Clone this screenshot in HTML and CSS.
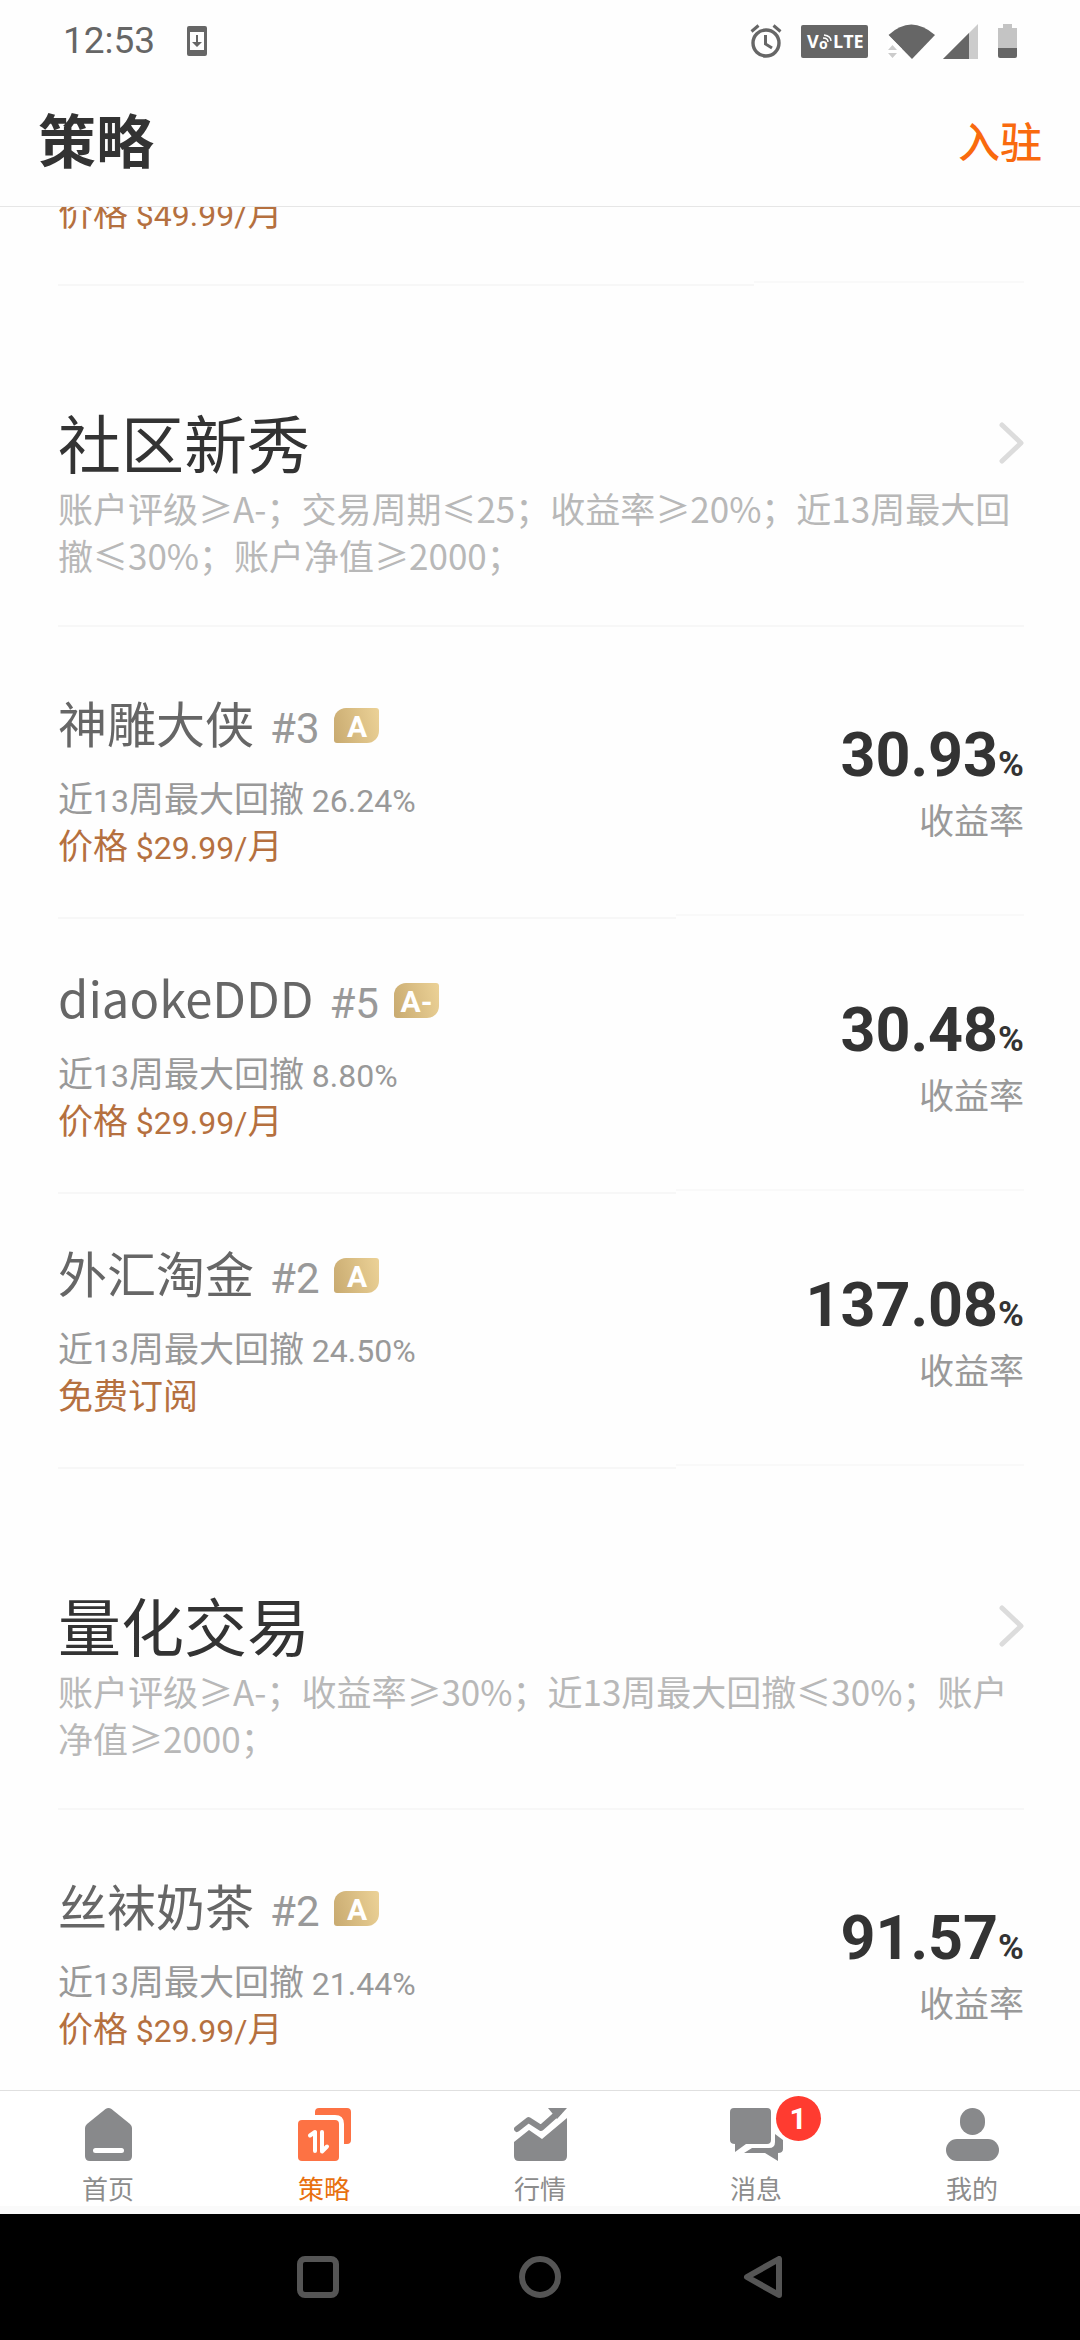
FILE: index.html
```html
<!DOCTYPE html>
<html lang="zh-CN">
<head>
<meta charset="utf-8">
<meta name="viewport" content="width=device-width, initial-scale=1">
<title>策略</title>
<link rel="stylesheet" href="styles.css">
</head>
<body>
<div class="statusbar">
  <div class="status-left">
    <span class="clock">12:53</span>
    <svg class="icon-update" width="20" height="30" viewBox="0 0 20 30"><path fill="#666" fill-rule="evenodd" d="M2 0h16a2 2 0 0 1 2 2v26a2 2 0 0 1-2 2H2a2 2 0 0 1-2-2V2a2 2 0 0 1 2-2zM3 6v18h14V6zM9 9h2v7h4l-5 5-5-5h4z"/></svg>
  </div>
  <div class="status-right">
    <svg width="32" height="34" viewBox="0 0 32 34" fill="none" stroke="#666"><circle cx="16" cy="19" r="13" stroke-width="3.4"/><path stroke-width="3" d="M15.500 11v9l6.500 4M1.500 7.500l7-6M30.500 7.500l-7-6"/></svg>
    <svg class="volte" width="67" height="33" viewBox="0 0 67 33"><rect width="67" height="33" rx="2" fill="#666"/><g fill="#fff" font-family="Open Sans" font-weight="700"><text x="6" y="23" font-size="18">V</text><text x="18" y="24" font-size="14">o</text><text x="32" y="23" font-size="18">LTE</text></g><path d="M22 13q5 0 5 4M23 10q7 1 7 6" fill="none" stroke="#fff" stroke-width="1.500"/></svg>
    <svg class="wifi" width="47" height="35" viewBox="0 0 47 35"><path fill="#666" d="M0.500 11Q23 -10 47 11L24 35z"/><path fill="#fff" d="M0 11L14 25v10H0z"/><path fill="#ccc" d="M0 26l4.500-5L9 26zM0 29h9l-4.500 5z"/></svg>
    <svg class="signal" width="35" height="35" viewBox="0 0 35 35"><path fill="#ccc" d="M35 0v35H0z"/><path fill="#666" d="M26 9v26H0z"/></svg>
    <svg class="battery" width="19" height="34" viewBox="0 0 19 34"><path fill="#c4c4c4" d="M5 0h9v4h5v20H0V4h5z"/><path fill="#666" d="M0 24h19v8a2 2 0 0 1-2 2H2a2 2 0 0 1-2-2z"/></svg>
  </div>
</div>
<header class="header">
  <h1 class="title">策略</h1>
  <button class="join" type="button">入驻</button>
</header>
<main class="content">
  <div class="list">
    <article class="item item-partial">
      <div class="info"><p class="price">价格 <span class="num">$49.99/</span>月</p></div>
      <div class="yield"></div>
    </article>

    <section class="group">
      <div class="group-head">
        <a class="group-link" href="#rookies"><h2 class="group-title">社区新秀</h2>
          <svg class="arrow" width="25" height="42" viewBox="0 0 25 42"><path d="M3 3l19 18L3 39" fill="none" stroke="#dcdcdc" stroke-width="5" stroke-linecap="round" stroke-linejoin="round"/></svg></a>
        <p class="rules">账户评级≥A-；交易周期≤25；收益率≥20%；近13周最大回撤≤30%；账户净值≥2000；</p>
      </div>
      <article class="item">
        <div class="info">
          <h3 class="name">神雕大侠 <span class="rank">#3</span><span class="grade">A</span></h3>
          <p class="drawdown">近<span class="num">13</span>周最大回撤 <span class="num">26.24%</span></p>
          <p class="price">价格 <span class="num">$29.99/</span>月</p>
        </div>
        <div class="yield"><p class="value">30.93<small class="unit">%</small></p><p class="caption">收益率</p></div>
      </article>
      <article class="item">
        <div class="info">
          <h3 class="name">diaokeDDD <span class="rank">#5</span><span class="grade">A-</span></h3>
          <p class="drawdown">近<span class="num">13</span>周最大回撤 <span class="num">8.80%</span></p>
          <p class="price">价格 <span class="num">$29.99/</span>月</p>
        </div>
        <div class="yield"><p class="value">30.48<small class="unit">%</small></p><p class="caption">收益率</p></div>
      </article>
      <article class="item">
        <div class="info">
          <h3 class="name">外汇淘金 <span class="rank">#2</span><span class="grade">A</span></h3>
          <p class="drawdown">近<span class="num">13</span>周最大回撤 <span class="num">24.50%</span></p>
          <p class="price">免费订阅</p>
        </div>
        <div class="yield"><p class="value">137.08<small class="unit">%</small></p><p class="caption">收益率</p></div>
      </article>
    </section>

    <section class="group">
      <div class="group-head">
        <a class="group-link" href="#quant"><h2 class="group-title">量化交易</h2>
          <svg class="arrow" width="25" height="42" viewBox="0 0 25 42"><path d="M3 3l19 18L3 39" fill="none" stroke="#dcdcdc" stroke-width="5" stroke-linecap="round" stroke-linejoin="round"/></svg></a>
        <p class="rules">账户评级≥A-；收益率≥30%；近13周最大回撤≤30%；账户净值≥2000；</p>
      </div>
      <article class="item">
        <div class="info">
          <h3 class="name">丝袜奶茶 <span class="rank">#2</span><span class="grade">A</span></h3>
          <p class="drawdown">近<span class="num">13</span>周最大回撤 <span class="num">21.44%</span></p>
          <p class="price">价格 <span class="num">$29.99/</span>月</p>
        </div>
        <div class="yield"><p class="value">91.57<small class="unit">%</small></p><p class="caption">收益率</p></div>
      </article>
    </section>
  </div>
</main>
<nav class="tabs">
  <a class="tab" href="#home"><svg width="53" height="53" viewBox="0 0 53 53"><path fill="#88898b" d="M23.500 1q3-2 6 0L48 16q2 2 2 4v28q0 5-5 5H8q-5 0-5-5V20q0-2 2-4z"/><rect x="11" y="40" width="31" height="5" rx="2.500" fill="#fff"/></svg>首页</a>
  <a class="tab tab-active" href="#strategy"><svg width="53" height="53" viewBox="0 0 53 53"><g fill="#fd7244"><path d="M17 7V4q0-4 4-4h28q4 0 4 4v28q0 4-4 4h-3V16q0-9-9-9z"/><rect y="12" width="41" height="41" rx="4"/></g><path d="M12 27.500l5-3.500V43M24 24v19.500l5-5" fill="none" stroke="#fff" stroke-width="4" stroke-linecap="round" stroke-linejoin="round"/></svg>策略</a>
  <a class="tab" href="#market"><svg width="53" height="53" viewBox="0 0 53 53"><path d="M3 21l11.500-9L27 20 45 4" fill="none" stroke="#88898b" stroke-width="6" stroke-linecap="round" stroke-linejoin="round"/><g fill="#88898b"><path d="M34 0h19L43 11z"/><path d="M0 34l15-12 13 9L53 10v38q0 5-5 5H5q-5 0-5-5z"/></g></svg>行情</a>
  <a class="tab" href="#messages"><span class="tab-icon"><svg width="53" height="53" viewBox="0 0 53 53"><g fill="#88898b"><path d="M4 0h33q4 0 4 4v28q0 4-4 4H16l-11 8v-8q-5 0-5-4V4q0-4 4-4z"/><path d="M45 26l8 6v9q0 4-5 4v8l-13-8H14l8-5h17q6 0 6-6z"/></g></svg><span class="badge">1</span></span>消息</a>
  <a class="tab" href="#me"><svg width="53" height="53" viewBox="0 0 53 53"><g fill="#88898b"><rect x="14" width="25" height="27" rx="12.500"/><rect y="31" width="53" height="22" rx="11"/></g></svg>我的</a>
</nav>
<div class="sysbar">
  <button class="sys" type="button" aria-label="最近任务"><svg width="42" height="42" viewBox="0 0 42 42"><rect x="3" y="3" width="36" height="36" rx="5" fill="none" stroke="#555" stroke-width="6"/></svg></button>
  <button class="sys" type="button" aria-label="主屏幕"><svg width="42" height="42" viewBox="0 0 42 42"><circle cx="21" cy="21" r="18" fill="none" stroke="#555" stroke-width="6"/></svg></button>
  <button class="sys" type="button" aria-label="返回"><svg width="42" height="42" viewBox="0 0 42 42"><path d="M38 3v36L6 21z" fill="none" stroke="#555" stroke-width="6" stroke-linejoin="round"/></svg></button>
</div>
</body>
</html>
```

FILE: styles.css
```css
* { box-sizing: border-box; margin: 0; padding: 0; }

body {
  display: flex;
  flex-direction: column;
  height: 100vh;
  background: #fefefe;
  color: #333;
  font-family: "Noto Sans CJK SC", sans-serif;
}

a { color: inherit; text-decoration: none; }
button { border: 0; background: none; font: inherit; color: inherit; }
svg { display: block; flex: none; }

/* Status bar */
.statusbar {
  display: flex;
  justify-content: space-between;
  align-items: center;
  height: 82px;
  padding: 0 63px;
}
.status-left { display: flex; align-items: center; gap: 32px; }
.clock { font: 400 37px/44px Roboto, sans-serif; color: #666; }
.status-right { display: flex; align-items: center; }
.volte { margin-left: 19px; }
.wifi { margin-left: 20px; }
.signal { margin-left: 8px; }
.battery { margin-left: 20px; }

/* Header */
.header {
  display: flex;
  justify-content: space-between;
  align-items: center;
  height: 125px;
  padding: 0 38px 8px;
  border-bottom: 1px solid #e6e6e6;
}
.title { font-size: 58px; font-weight: 700; line-height: 112px; padding-bottom: 4px; }
.join { font-size: 42px; font-weight: 500; line-height: 116px; color: #f96a0e; }

/* Strategy list, scrolled under the header */
.content { flex: 1; min-height: 0; overflow: hidden; }
.list { margin-top: -20px; padding: 0 56px 0 58px; }

.group-head {
  padding: 112px 0 47px;
  margin-bottom: 17px;
  border-bottom: 2px solid #f7f7f7;
}
.group-link { display: flex; justify-content: space-between; align-items: center; }
.group-title { font-size: 63px; font-weight: 400; line-height: 86px; }
.arrow { margin-top: 4px; }
.rules { font-size: 35px; font-weight: 400; line-height: 47px; color: #b8b8b8; }

.item { display: flex; align-items: flex-start; }
.info {
  width: 64%;
  padding: 48px 0 50px;
  border-bottom: 2px solid #f7f7f7;
}
.yield {
  width: 36%;
  padding: 78px 0 72px;
  border-bottom: 2px solid #f9f9f9;
  text-align: right;
}
.item-partial .info { width: 72%; padding-top: 0; }
.item-partial .yield { width: 28%; padding: 94px 0 0; }

.name {
  display: flex;
  align-items: baseline;
  margin-bottom: 21px;
  font-size: 49px;
  font-weight: 400;
  line-height: 60px;
  color: #666;
}
.rank { margin-left: 16px; font: 400 42px/42px Roboto, sans-serif; color: #999; }
.grade {
  align-self: center;
  width: 45px;
  height: 35px;
  margin: 6px 0 0 15px;
  border-radius: 12px 3px;
  background: linear-gradient(75deg, #c8aa70, #ecd297);
  color: #fff;
  font: 700 30px/37px Roboto, sans-serif;
  text-align: center;
}
.drawdown, .price { font-size: 35px; font-weight: 400; line-height: 47px; color: #999; }
.price { color: #b5703f; }
.num { font: 400 32px/32px Roboto, sans-serif; }

.value { font: 700 61px/66px Roboto, sans-serif; }
.unit { font-size: 35px; line-height: 35px; }
.caption { margin-top: 7px; font-size: 35px; font-weight: 400; line-height: 47px; color: #999; }

/* Bottom tabs */
.tabs {
  display: flex;
  height: 124px;
  border-top: 1px solid #e0e0e0;
  border-bottom: 8px solid #fafafa;
  background: #fff;
}
.tab {
  flex: 1;
  display: flex;
  flex-direction: column;
  align-items: center;
  gap: 10px;
  padding-top: 17px;
  font-size: 26px;
  font-weight: 400;
  line-height: 34px;
  color: #8c8c8c;
}
.tab-active { color: #e8700f; }
.tab-icon { position: relative; }
.badge {
  position: absolute;
  top: -12px;
  left: 46px;
  width: 45px;
  height: 45px;
  border-radius: 50%;
  background: #ff3b30;
  color: #fff;
  font: 700 30px/46px Roboto, sans-serif;
  text-align: center;
}

/* System navigation */
.sysbar {
  display: flex;
  justify-content: center;
  align-items: center;
  gap: 180px;
  height: 126px;
  background: #000;
}
```
